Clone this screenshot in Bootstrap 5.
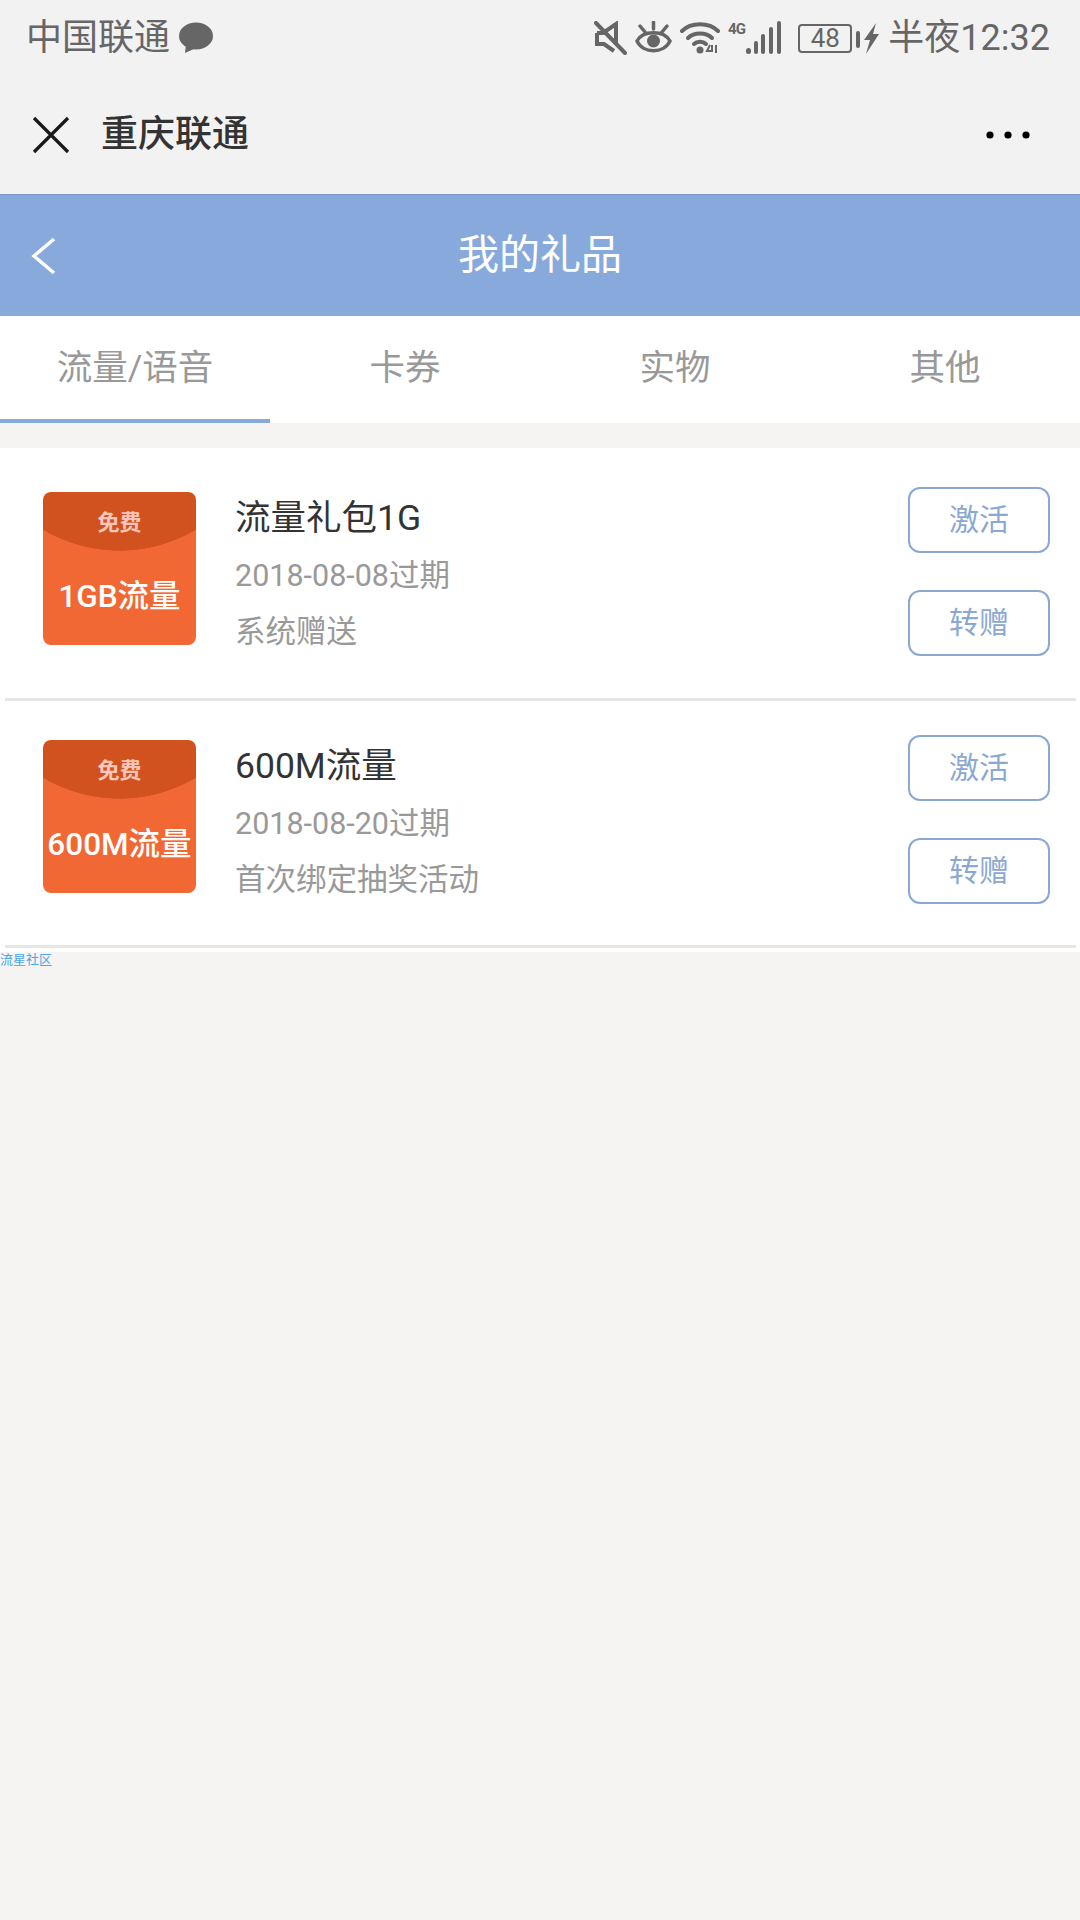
<!DOCTYPE html>
<html lang="zh-CN">

<head>
  <meta charset="UTF-8" />
  <title>我的礼品</title>
  <meta name="viewport" content="width=device-width, initial-scale=1" />
  <link href="https://cdn.jsdelivr.net/npm/bootstrap@5.3.3/dist/css/bootstrap.min.css" rel="stylesheet" />
  <script src="https://cdn.jsdelivr.net/npm/bootstrap@5.3.3/dist/js/bootstrap.bundle.min.js"></script>
  <style>
    body {
      background: #f5f4f3;
      font-family: Roboto, "Noto Sans CJK SC", sans-serif;
      min-height: 1920px;
    }

    /* status bar + wechat title */
    .phone-top {
      background: #f2f2f2;
      height: 195px;
      border-bottom: 1px solid #7c9ccd;
    }

    .status-row {
      height: 76px;
      padding: 0 30px 0 26px;
      color: #666;
      font-size: 35px;
    }

    .status-text {
      font-size: 36px;
    }

    .status-row svg {
      display: block;
    }

    .batt-box {
      width: 54px;
      height: 29px;
      border: 2px solid #666;
      border-radius: 4px;
      font-size: 26px;
      line-height: 25px;
      text-align: center;
    }

    .title-row {
      height: 118px;
      padding: 0 32px;
    }

    .title-text {
      color: #333;
      font-size: 37px;
      font-weight: 500;
      margin-left: 31px;
    }

    .dots-icon {
      margin-right: 18px;
    }

    /* blue page header */
    .page-head {
      background: #88a9db;
      height: 121px;
      color: #fff;
      font-size: 41px;
      padding-left: 30px;
    }

    .page-head-title {
      margin-right: 56px;
    }

    /* tabs */
    .tab-row {
      background: #fff;
      height: 107px;
    }

    .tab-cell {
      width: 25%;
      height: 107px;
      color: #999;
      font-size: 35.5px;
      line-height: 104px;
      text-align: center;
      border-bottom: 4px solid transparent;
    }

    .tab-cell.on {
      border-bottom-color: #88a9db;
    }

    /* gift list */
    .gift-list {
      background: #fff;
      margin-top: 25px;
      padding-top: 6px;
      padding-bottom: 4px;
    }

    .gift-row {
      height: 247px;
      margin: 0 4px 0 5px;
      padding: 38px 26px 0 38px;
      border-bottom: 3px solid #e6e6e6;
    }

    .gift-row+.gift-row {
      margin-top: 3px;
      height: 244px;
      padding-top: 36px;
    }

    .gift-thumb {
      width: 153px;
      height: 153px;
      border-radius: 8px;
      color: #fff;
      background: radial-gradient(circle 150px at 50% -91px, #d1521f 99.6%, #f26835 100%);
      font-weight: 700;
      flex-shrink: 0;
    }

    .thumb-free {
      color: #fcc6bb;
      font-size: 22px;
      line-height: 30px;
      margin-top: 16px;
    }

    .thumb-name {
      font-size: 31.5px;
      font-weight: 500;
      line-height: 40px;
      margin-top: 39px;
      white-space: nowrap;
    }

    .gift-info {
      margin-left: 39px;
      padding-top: 3px;
    }

    .gift-name {
      color: #333;
      font-size: 35.5px;
      line-height: 46px;
      margin-bottom: 12px;
    }

    .gift-sub {
      color: #999;
      font-size: 30.5px;
      line-height: 46px;
      margin-bottom: 10px;
    }

    .gift-btns {
      margin-top: -5px;
      gap: 37px;
    }

    .btn.gift-btn {
      width: 142px;
      height: 66px;
      padding: 0;
      color: #8ba8d3;
      background: #fff;
      border: 2.5px solid #8ba8d3;
      border-radius: 12px;
      font-size: 30px;
      line-height: 60px;
    }

    .foot-link {
      color: #4aa6e4;
      font-size: 13px;
      line-height: 15px;
      text-decoration: none;
    }
  </style>
</head>

<body>

  <!-- status bar and title -->
  <div class="phone-top">
    <div class="status-row d-flex align-items-center">
      <span class="status-text">中国联通</span>
      <svg class="ms-2" width="36" height="32" viewBox="0 0 36 32">
        <ellipse cx="18" cy="14" rx="17" ry="13.5" fill="#666" />
        <path d="M8 22 L7 31 L18 26 Z" fill="#666" />
      </svg>
      <div class="d-flex align-items-center ms-auto">
        <svg width="33" height="34" viewBox="0 0 33 34" fill="none" stroke="#666" stroke-width="4">
          <path d="M3 12 H9 L22 3 V24" />
          <path d="M3 12 V23 H10 L20 30" />
          <path d="M2 2 L31 32" stroke-linecap="round" />
        </svg>
        <svg class="ms-2" width="37" height="34" viewBox="0 0 37 34" fill="none" stroke="#666" stroke-width="3.5">
          <path d="M2 20 C8 9 29 9 35 20 C29 33 8 33 2 20 Z" />
          <circle cx="18.5" cy="20" r="6.5" fill="#666" stroke="none" />
          <path d="M18.5 1 V8 M5 5 L10 11 M32 5 L27 11" stroke-linecap="round" />
        </svg>
        <svg class="ms-2" width="40" height="34" viewBox="0 0 40 34" fill="none" stroke="#666" stroke-width="4">
          <path d="M2 10 C11 1 29 1 38 10" stroke-linecap="round" />
          <path d="M8 17 C14 11 26 11 32 17" stroke-linecap="round" />
          <path d="M14 23 C17 20 23 20 26 23" stroke-linecap="round" />
          <circle cx="20" cy="29" r="3.5" fill="#666" stroke="none" />
          <path d="M30 24 L27 30 H32 V24 M36 24 V32" stroke-width="2" />
        </svg>
        <svg class="ms-2" width="54" height="36" viewBox="0 0 54 36">
          <text x="0" y="14" font-family="Roboto" font-size="15" font-weight="700" fill="#666" textLength="18">4G</text>
          <rect x="18" y="28" width="5" height="6" rx="2.5" fill="#666" />
          <rect x="26" y="21" width="4" height="13" rx="2" fill="#666" />
          <rect x="33" y="14" width="4" height="20" rx="2" fill="#666" />
          <rect x="41" y="7" width="4" height="27" rx="2" fill="#666" />
          <rect x="49" y="1" width="4" height="33" rx="2" fill="#666" />
        </svg>
        <div class="batt-box ms-3">48</div>
        <svg class="ms-1" width="24" height="34" viewBox="0 0 24 34">
          <rect x="0" y="10" width="4" height="17" rx="2" fill="#666" />
          <path d="M20 2 L8 19 H14 L10 33 L23 13 H17 Z" fill="#666" />
        </svg>
        <span class="status-text ms-2">半夜12:32</span>
      </div>
    </div>
    <div class="title-row d-flex align-items-center">
      <svg width="38" height="38" viewBox="0 0 38 38" fill="none" stroke="#1a1a1a" stroke-width="3.2">
        <path d="M2 2 L36 36 M36 2 L2 36" />
      </svg>
      <span class="title-text">重庆联通</span>
      <svg class="dots-icon ms-auto" width="44" height="8" viewBox="0 0 44 8" fill="#000">
        <circle cx="4" cy="4" r="3.6" />
        <circle cx="22" cy="4" r="3.6" />
        <circle cx="40" cy="4" r="3.6" />
      </svg>
    </div>
  </div>

  <!-- header -->
  <div class="page-head d-flex align-items-center">
    <svg width="26" height="38" viewBox="0 0 26 38" fill="none" stroke="#fff" stroke-width="3.5">
      <path d="M24 2 L4 19 L24 36" />
    </svg>
    <div class="page-head-title flex-grow-1 text-center">我的礼品</div>
  </div>

  <!-- tabs -->
  <div class="tab-row d-flex">
    <div class="tab-cell on">流量/语音</div>
    <div class="tab-cell">卡券</div>
    <div class="tab-cell">实物</div>
    <div class="tab-cell">其他</div>
  </div>

  <!-- gifts -->
  <div class="gift-list">
    <div class="gift-row d-flex">
      <div class="gift-thumb d-flex flex-column align-items-center">
        <div class="thumb-free">免费</div>
        <div class="thumb-name">1GB流量</div>
      </div>
      <div class="gift-info flex-grow-1">
        <div class="gift-name">流量礼包1G</div>
        <div class="gift-sub">2018-08-08过期</div>
        <div class="gift-sub">系统赠送</div>
      </div>
      <div class="gift-btns d-flex flex-column">
        <button class="btn gift-btn">激活</button>
        <button class="btn gift-btn">转赠</button>
      </div>
    </div>
    <div class="gift-row d-flex">
      <div class="gift-thumb d-flex flex-column align-items-center">
        <div class="thumb-free">免费</div>
        <div class="thumb-name">600M流量</div>
      </div>
      <div class="gift-info flex-grow-1">
        <div class="gift-name">600M流量</div>
        <div class="gift-sub">2018-08-20过期</div>
        <div class="gift-sub">首次绑定抽奖活动</div>
      </div>
      <div class="gift-btns d-flex flex-column">
        <button class="btn gift-btn">激活</button>
        <button class="btn gift-btn">转赠</button>
      </div>
    </div>
  </div>
  <a class="foot-link d-block" href="#">流星社区</a>

</body>

</html>
